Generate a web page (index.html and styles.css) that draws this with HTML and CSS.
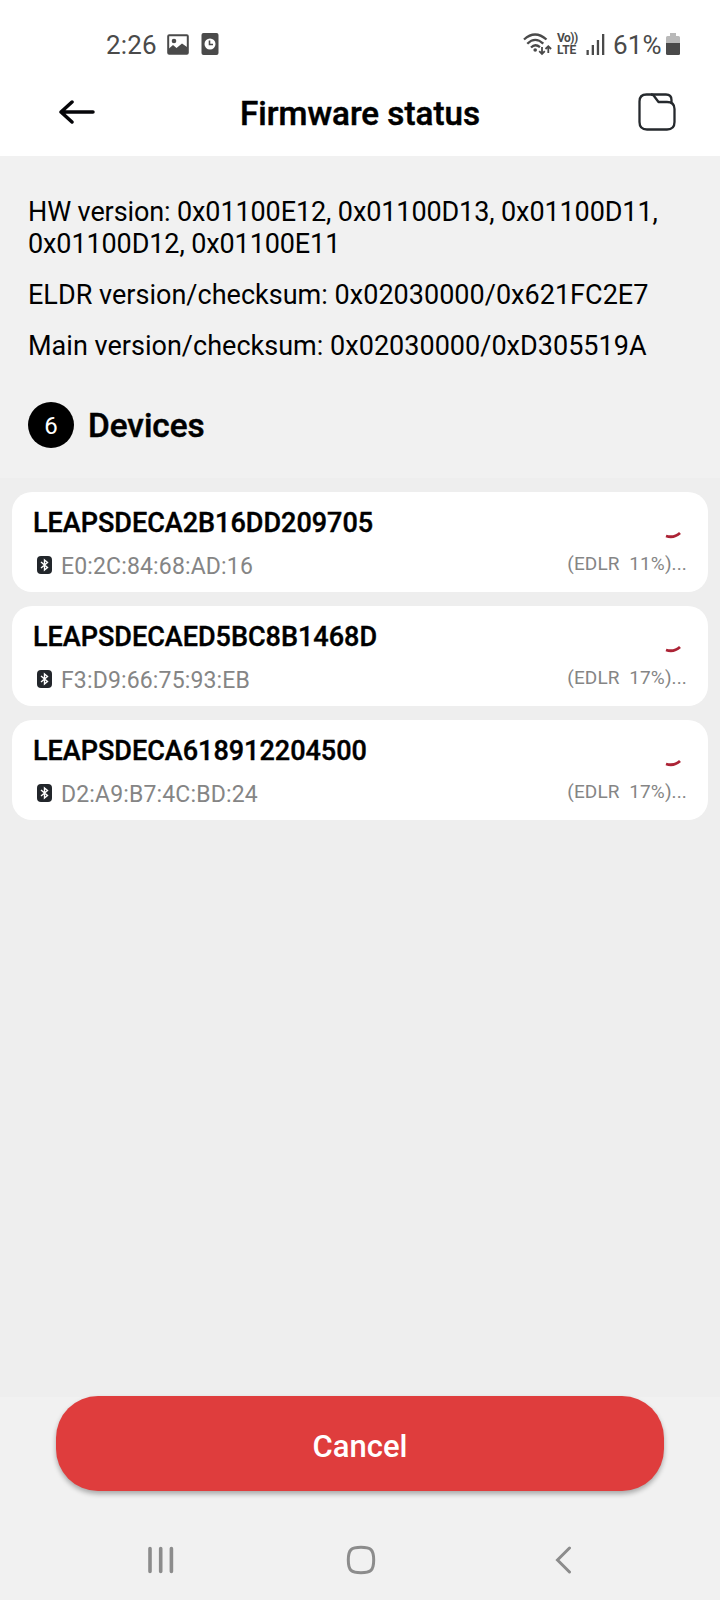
FILE: index.html
```html
<!DOCTYPE html>
<html lang="en">
<head>
<meta charset="utf-8">
<title>Firmware status</title>
<link rel="stylesheet" href="styles.css">
</head>
<body>
<div class="screen">
  <div class="statusbar">
    <div class="status-left">
      <span class="clock">2:26</span>
      <svg class="photo-icon" width="22" height="21" viewBox="0 0 22 21"><rect x="1.2" y="1.2" width="19.6" height="18.6" rx="1" fill="none" stroke="#4a4a4a" stroke-width="2"/><circle cx="7" cy="7" r="2.3" fill="#4a4a4a"/><path d="M2 14.500 6 11l3.500 3 5.500-4.500L20 13v6H2z" fill="#4a4a4a"/></svg>
      <svg class="clock-icon" width="18" height="22" viewBox="0 0 18 22"><rect x=".5" width="17" height="22" rx="2" fill="#4a4a4a"/><circle cx="9" cy="11" r="5.500" fill="#fff"/><path d="M8.500 7.500v4h3.500" fill="none" stroke="#4a4a4a" stroke-width="1.600"/></svg>
    </div>
    <div class="status-right">
      <svg width="29" height="23" viewBox="0 0 29 23" fill="none" stroke="#4a4a4a" stroke-width="2.300"><path d="M1 6.500Q12 -3.500 23.500 6.500M4.300 10.700Q12.200 3 20.300 10.700M8 14.500Q12.200 10.300 17 14.200"/><circle cx="12.200" cy="17" r="1.800" fill="#4a4a4a" stroke="none"/><path d="M19 14v7M16.200 18.200 19 21l2.800-2.800M25.300 20v-7M22.500 16l2.800-2.800 2.800 2.800" stroke-width="1.800"/></svg>
      <span class="volte"><span class="vo">Vo))</span><span>LTE</span></span>
      <svg class="signal" width="19" height="21" viewBox="0 0 19 21" fill="#4a4a4a"><rect x=".5" y="16" width="2.300" height="5"/><rect x="5.700" y="11" width="2.300" height="10"/><rect x="10.800" y="6" width="2.300" height="15"/><rect x="16" y="0" width="2.300" height="21"/></svg>
      <span class="percent">61%</span>
      <svg class="battery" width="14" height="22" viewBox="0 0 14 22"><path d="M4 0h6v3h2.500q1.500 0 1.500 1.500V10H0V4.500Q0 3 1.500 3H4z" fill="#b9b9b9"/><path d="M0 10h14v10.500q0 1.500-1.500 1.500h-11Q0 22 0 20.500z" fill="#4a4a4a"/></svg>
    </div>
  </div>

  <header class="header">
    <svg class="back" width="36" height="24" viewBox="0 0 36 24" fill="none" stroke="#050508" stroke-width="3.500" stroke-linecap="round" stroke-linejoin="round"><path d="M34 12H2M13 2 2 12l11 10"/></svg>
    <h1 class="title">Firmware status</h1>
    <svg class="folder" width="38" height="38" viewBox="0 0 38 38" fill="none" stroke="#25292d" stroke-width="2.300" stroke-linejoin="round"><path d="M1.500 8.500q0-7 7-7H13q2 0 3.200 1.700l4.300 5.800H29q7.500 0 7.500 7V29q0 7.500-7.500 7.500H9q-7.500 0-7.500-7.500z"/><path d="M13 1.500h15q5.500 0 5.500 5.500v3.200"/></svg>
  </header>

  <section class="info">
    <p class="line hw">HW version: 0x01100E12, 0x01100D13, 0x01100D11, 0x01100D12, 0x01100E11</p>
    <p class="line next">ELDR version/checksum: 0x02030000/0x621FC2E7</p>
    <p class="line next">Main version/checksum: 0x02030000/0xD305519A</p>
    <div class="devices"><span class="count">6</span><h2 class="devices-title">Devices</h2></div>
  </section>

  <main class="list">
    <article class="card">
      <div class="device">
        <h3 class="name">LEAPSDECA2B16DD209705</h3>
        <div class="address"><svg class="bt" width="15" height="18" viewBox="0 0 15 18"><rect width="15" height="18" rx="4" fill="#22262b"/><path d="M4 6l6.500 5.500L7.500 14V4l3 2.500L4 12" fill="none" stroke="#fff" stroke-width="1.400"/></svg><span>E0:2C:84:68:AD:16</span></div>
      </div>
      <div class="progress">
        <svg class="spinner" width="17" height="8" viewBox="0 0 17 8"><path d="M1 5Q9 7.500 15 2" fill="none" stroke="#ac2335" stroke-width="2.800"/></svg>
        <span>(EDLR&nbsp; 11%)...</span>
      </div>
    </article>
    <article class="card">
      <div class="device">
        <h3 class="name">LEAPSDECAED5BC8B1468D</h3>
        <div class="address"><svg class="bt" width="15" height="18" viewBox="0 0 15 18"><rect width="15" height="18" rx="4" fill="#22262b"/><path d="M4 6l6.500 5.500L7.500 14V4l3 2.500L4 12" fill="none" stroke="#fff" stroke-width="1.400"/></svg><span>F3:D9:66:75:93:EB</span></div>
      </div>
      <div class="progress">
        <svg class="spinner" width="17" height="8" viewBox="0 0 17 8"><path d="M1 5Q9 7.500 15 2" fill="none" stroke="#ac2335" stroke-width="2.800"/></svg>
        <span>(EDLR&nbsp; 17%)...</span>
      </div>
    </article>
    <article class="card">
      <div class="device">
        <h3 class="name">LEAPSDECA618912204500</h3>
        <div class="address"><svg class="bt" width="15" height="18" viewBox="0 0 15 18"><rect width="15" height="18" rx="4" fill="#22262b"/><path d="M4 6l6.500 5.500L7.500 14V4l3 2.500L4 12" fill="none" stroke="#fff" stroke-width="1.400"/></svg><span>D2:A9:B7:4C:BD:24</span></div>
      </div>
      <div class="progress">
        <svg class="spinner" width="17" height="8" viewBox="0 0 17 8"><path d="M1 5Q9 7.500 15 2" fill="none" stroke="#ac2335" stroke-width="2.800"/></svg>
        <span>(EDLR&nbsp; 17%)...</span>
      </div>
    </article>
  </main>

  <footer class="footer">
    <button class="cancel">Cancel</button>
    <nav class="nav">
      <svg width="26" height="28" viewBox="0 0 26 28" stroke="#8c8c8c" stroke-width="3.600" stroke-linecap="round"><path d="M2 2.500v23M12.700 2.500v23M23.400 2.500v23"/></svg>
      <svg class="home" width="30" height="30" viewBox="0 0 30 30" fill="none" stroke="#8c8c8c" stroke-width="3"><path d="M15 2.300c9.500 0 12.700 2 12.700 12.700s-3.200 12.700-12.700 12.700S2.300 25.700 2.300 15 5.500 2.300 15 2.300z"/></svg>
      <svg width="17" height="28" viewBox="0 0 17 28" fill="none" stroke="#8c8c8c" stroke-width="3" stroke-linecap="round"><path d="M14.500 2 2.500 14l12 12"/></svg>
    </nav>
  </footer>
</div>
</body>
</html>
```
FILE: styles.css
```css
* { box-sizing: border-box; margin: 0; padding: 0; }
body { font-family: Roboto, "Liberation Sans", sans-serif; color: #000; background: #f1f1f1; }
svg { display: block; flex: none; }
.screen { width: 720px; height: 1600px; display: flex; flex-direction: column; }

.statusbar { height: 74px; padding: 14px 40px 0 106px; background: #fff; display: flex; justify-content: space-between; align-items: center; color: #4a4a4a; }
.status-left, .status-right { display: flex; align-items: center; }
.clock { font-size: 26px; line-height: 30px; margin-top: 2px; letter-spacing: .2px; }
.photo-icon { margin-left: 10px; }
.clock-icon { margin-left: 12px; }
.volte { width: 21px; margin-left: 5px; display: flex; flex-direction: column; font-size: 12px; line-height: 12px; font-weight: 700; white-space: nowrap; }
.vo { letter-spacing: -.5px; }
.signal { margin-left: 8px; }
.percent { font-size: 26px; line-height: 30px; margin-left: 8px; margin-top: 2px; width: 50px; letter-spacing: .2px; }
.battery { margin-left: 3px; }

.header { height: 82px; background: #fff; padding: 0 44px 6px 59px; display: flex; justify-content: space-between; align-items: center; }
.title { font-size: 33.2px; line-height: 40px; font-weight: 500; margin: 4px 13px 0 0; -webkit-text-stroke: .5px #000; }

.info { height: 322px; background: #f1f1f1; padding: 40px 28px 0; }
.line { font-size: 27px; line-height: 32px; }
.hw { letter-spacing: -.11px; }
.next { margin-top: 19px; letter-spacing: .02px; }
.devices { margin-top: 40px; display: flex; align-items: center; gap: 14px; }
.count { width: 46px; height: 46px; border-radius: 50%; background: #000; color: #fff; font-size: 24px; line-height: 49px; text-align: center; }
.devices-title { font-size: 33.3px; line-height: 44px; font-weight: 500; padding-top: 2px; -webkit-text-stroke: .5px #000; }

.list { flex: 1; background: #eee; padding: 14px 12px; display: flex; flex-direction: column; gap: 14px; }
.card { height: 100px; border-radius: 20px; background: #fff; padding: 15px 21px 0; display: flex; justify-content: space-between; }
.name { font-size: 27px; line-height: 32px; font-weight: 500; -webkit-text-stroke: .4px #000; }
.address { display: flex; align-items: center; margin-top: 14px; padding-left: 4px; gap: 9px; color: #858585; font-size: 23px; line-height: 28px; letter-spacing: .15px; }
.bt { margin-bottom: 5px; }
.progress { padding-top: 24px; display: flex; flex-direction: column; align-items: flex-end; color: #858585; font-size: 19px; line-height: 24px; letter-spacing: .12px; }
.spinner { margin: 0 5px 13px 0; }

.footer { height: 203px; background: #f1f1f1; }
.cancel { display: block; position: relative; width: 608px; height: 95px; margin: -1px auto 0; border: 0; border-radius: 42px; background: #df3d3d; color: #fff; font: 500 31px/40px Roboto, sans-serif; padding-top: 7px; box-shadow: 0 3px 5px rgba(0, 0, 0, .3); }
.nav { height: 109px; padding: 29px 148px 0 148px; display: flex; justify-content: space-between; align-items: center; }
.home { margin-right: 7px; }
```
